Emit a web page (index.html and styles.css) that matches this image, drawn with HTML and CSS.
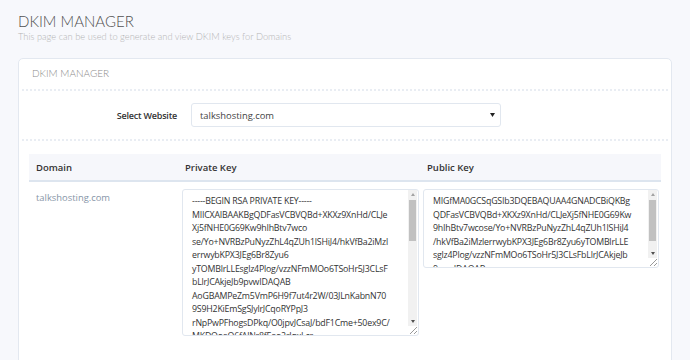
FILE: index.html
```html
<!DOCTYPE html>
<html lang="en">
<head>
    <meta charset="UTF-8">
    <title>DKIM Manager</title>
    <link rel="stylesheet" href="styles.css">
</head>
<body>
    <div class="page-head">
        <h1>DKIM MANAGER</h1>
        <p>This page can be used to generate and view DKIM keys for Domains</p>
    </div>

    <div class="panel">
        <div class="panel-title">DKIM MANAGER</div>

        <div class="form-row">
            <label class="form-label" for="website">Select Website</label>
            <select class="form-select" id="website">
                <option>talkshosting.com</option>
            </select>
        </div>

        <div class="key-table">
            <div class="key-head">
                <div class="cell">Domain</div>
                <div class="cell">Private Key</div>
                <div class="cell">Public Key</div>
            </div>
            <div class="key-row">
                <div class="cell domain">talkshosting.com</div>
                <div class="cell">
                    <div class="key-wrap private">
                        <textarea class="key-box" wrap="off" readonly>-----BEGIN RSA PRIVATE KEY-----
MIICXAIBAAKBgQDFasVCBVQBd+XKXz9XnHd/CLJe
Xj5fNHE0G69Kw9hIhBtv7wco
se/Yo+NVRBzPuNyzZhL4qZUh1lSHiJ4/hkVfBa2iMzl
errwybKPX3JEg6Br8Zyu6
yTOMBlrLLEsglz4Plog/vzzNFmMOo6TSoHr5J3CLsF
bLlrJCAkjeJb9pvwIDAQAB
AoGBAMPeZm5VmP6H9f7ut4r2W/03JLnKabnN70
9S9H2KiEmSgSJylrJCqoRYPpJ3
rNpPwPFhogsDPkq/O0jpvJCsaJ/bdF1Cme+50ex9C/
MKDQoeQ6fAlNr8fEeo2rJqxLcr
kR3uT2yZzE9vWq0bNa7sLpHcXgD1fMi4oYeQ8tJvUw
Gk2nR5bCs7dPjQ==
-----END RSA PRIVATE KEY-----</textarea>
                        <div class="scrollbar">
                            <span class="arrow up"></span>
                            <span class="thumb"></span>
                            <span class="track"></span>
                            <span class="arrow down"></span>
                        </div>
                        <span class="grip"></span>
                    </div>
                </div>
                <div class="cell">
                    <div class="key-wrap public">
                        <textarea class="key-box" wrap="off" readonly>MIGfMA0GCSqGSIb3DQEBAQUAA4GNADCBiQKBg
QDFasVCBVQBd+XKXz9XnHd/CLJeXj5fNHE0G69Kw
9hIhBtv7wcose/Yo+NVRBzPuNyzZhL4qZUh1lSHiJ4
/hkVfBa2iMzlerrwybKPX3JEg6Br8Zyu6yTOMBlrLLE
sglz4Plog/vzzNFmMOo6TSoHr5J3CLsFbLlrJCAkjeJb
9pvwIDAQAB</textarea>
                        <div class="scrollbar">
                            <span class="arrow up"></span>
                            <span class="thumb"></span>
                            <span class="track"></span>
                            <span class="arrow down"></span>
                        </div>
                        <span class="grip"></span>
                    </div>
                </div>
            </div>
        </div>
    </div>
</body>
</html>
```

FILE: styles.css
```css
* {
    box-sizing: border-box;
}

body {
    margin: 0;
    padding: 12px 18px 0;
    background: #f7f8fc;
    font-family: 'Open Sans', sans-serif;
    color: #333;
    overflow: hidden;
}

.page-head h1 {
    margin: 0;
    font-family: Lato, 'Open Sans', sans-serif;
    font-weight: 300;
    font-size: 15px;
    line-height: 18px;
    color: #505050;
}

.page-head p {
    margin: 1px 0 0;
    font-family: Lato, sans-serif;
    font-weight: 300;
    font-size: 9.3px;
    line-height: 12px;
    color: #b4b4b4;
}

.panel {
    margin-top: 15px;
    height: 320px;
    background: #fff;
    border: 1px solid #e3e8f0;
    border-radius: 5px;
    padding: 0 3px;
}

.panel-title {
    padding: 7px 10px 9px;
    font-family: Lato, sans-serif;
    font-weight: 300;
    font-size: 10px;
    line-height: 14px;
    color: #8a8a8a;
    border-bottom: 2px dotted #e9edf3;
}

.form-row {
    display: flex;
    align-items: center;
    height: 50px;
    border-bottom: 2px dotted #e9edf3;
}

.form-label {
    width: 169px;
    padding-right: 14px;
    text-align: right;
    font-size: 9px;
    font-weight: 600;
    letter-spacing: -0.2px;
    color: #333;
}

.form-select {
    width: 310px;
    height: 24px;
    padding: 0 6px 0 8px;
    font-family: 'Open Sans', sans-serif;
    font-size: 9.4px;
    color: #444;
    background: #fff url("data:image/svg+xml;utf8,<svg xmlns='http://www.w3.org/2000/svg' width='5' height='4'><path d='M0 0L5 0L2.5 4z' fill='%23222'/></svg>") no-repeat right 5px center;
    border: 1px solid #e1e7ef;
    border-radius: 3px;
    outline: none;
    appearance: none;
    -webkit-appearance: none;
}

.key-table {
    margin: 13px 7px 0;
}

.key-head,
.key-row {
    display: grid;
    grid-template-columns: 149px 242px 1fr;
}

.key-head {
    height: 28px;
    align-items: center;
    background: #f6f7fb;
    border-bottom: 2px solid #dde5ef;
    font-size: 9.5px;
    font-weight: 600;
    color: #333;
}

.key-head .cell {
    padding-left: 7px;
}

.key-row {
    padding-top: 7px;
    align-items: start;
}

.domain {
    padding: 2px 7px 0;
    font-size: 9.4px;
    line-height: 14px;
    color: #8796a8;
}

.key-wrap {
    position: relative;
    margin-left: 4px;
    width: 237px;
    height: 147px;
}

.key-wrap.public {
    margin-left: 3px;
    width: 236px;
    height: 79px;
}

.key-box {
    display: block;
    width: 100%;
    height: 100%;
    padding: 5px 14px 5px 9px;
    font-family: 'Open Sans', sans-serif;
    font-size: 8.8px;
    line-height: 13.5px;
    letter-spacing: -0.2px;
    color: #333;
    border: 1px solid #e1e7ef;
    border-radius: 3px;
    outline: none;
    resize: none;
    overflow: hidden;
}

/* fake scrollbar, the real one is hidden in screenshots */
.scrollbar {
    position: absolute;
    top: 1px;
    right: 2px;
    bottom: 10px;
    width: 9px;
    display: flex;
    flex-direction: column;
    background: #f1f1f1;
}

.arrow {
    height: 9px;
    display: flex;
    align-items: center;
    justify-content: center;
}

.arrow::before {
    content: '';
    border-left: 2.5px solid transparent;
    border-right: 2.5px solid transparent;
}

.arrow.up::before {
    border-bottom: 3px solid #a3a3a3;
}

.arrow.down::before {
    border-top: 3px solid #505050;
}

.thumb {
    height: 41px;
    margin: 1px 1px 0;
    background: #c1c1c1;
}

.track {
    flex: 1;
}

.grip {
    position: absolute;
    right: 2px;
    bottom: 2px;
    width: 7px;
    height: 7px;
    background: linear-gradient(135deg, transparent 45%, #999 45%, #999 53%, transparent 53%, transparent 72%, #999 72%, #999 80%, transparent 80%);
}
```
